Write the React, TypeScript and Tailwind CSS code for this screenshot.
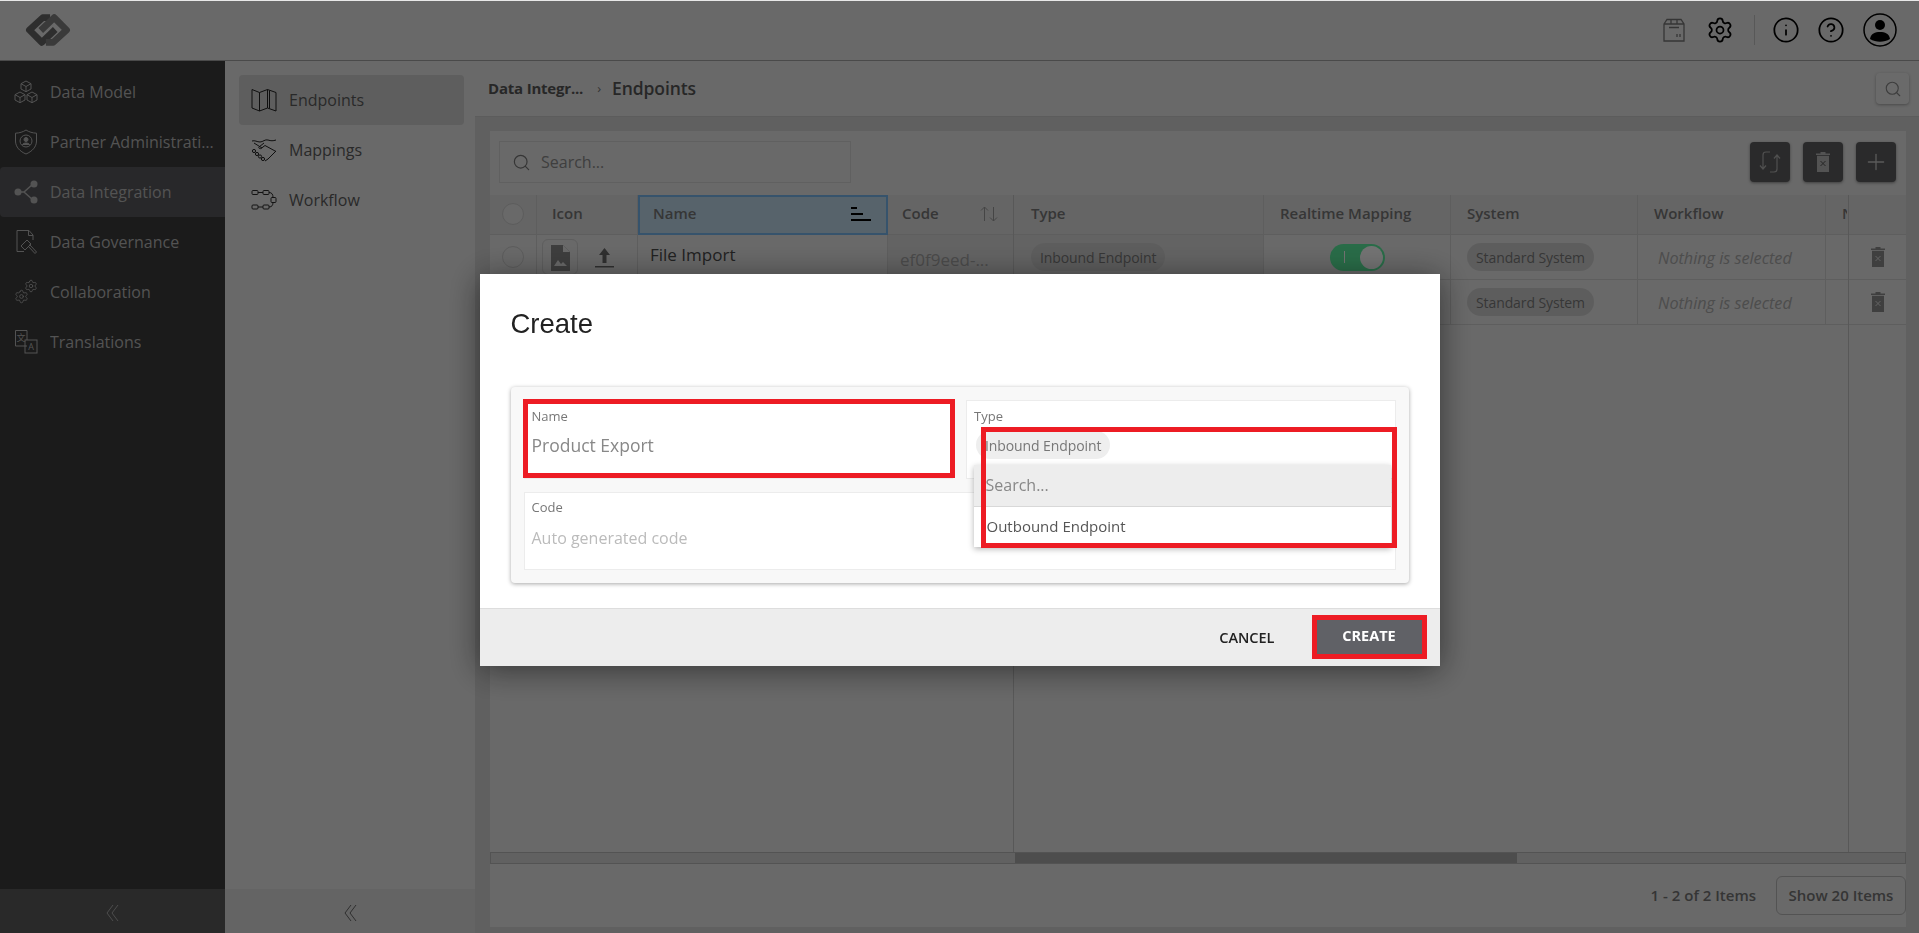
import { CircleHelp, Info, Plus, Search, Settings } from 'lucide-react';

const MAIN_NAV = ['Data Model', 'Partner Administration', 'Data Integration', 'Data Governance', 'Collaboration', 'Translations'];
const SUB_NAV = ['Endpoints', 'Mappings', 'Workflow'];

function Logo() {
  return (
    <svg width="48" height="32" viewBox="0 0 44 31" fill="none" strokeWidth="6.500" strokeLinejoin="round">
      <path d="M24 3.500H17L4 15.500 16 27.500 29 15" stroke="#666666" />
      <path d="M20 27.500H27L40 15.500 28 3.500 15 16" stroke="#808080" />
    </svg>
  );
}

function Collapse({ color }: { color: string }) {
  return (
    <svg width="13" height="18" viewBox="0 0 13 18" fill="none" stroke={color} strokeWidth="1">
      <path d="M7 1L1 9l6 8M12 1L6 9l6 8" />
    </svg>
  );
}

function MainIcon({ name }: { name: string }) {
  const common = { width: 24, height: 26, viewBox: '0 0 24 26', fill: 'none', stroke: '#b8b8b8', strokeWidth: 1 };
  if (name === 'Data Model') {
    return (
      <svg {...common}>
        <path d="M12 2l5 2.700v5.300l-5 2.700-5-2.700V4.700zM7 4.700l5 2.800 5-2.800M12 7.500v5.200" />
        <path d="M6 13l5 2.700v5.300L6 23.700 1 21v-5.300zM1 15.700l5 2.800 5-2.800M6 18.500v5.200" />
        <path d="M18 13l5 2.700v5.300l-5 2.700-5-2.700v-5.300zM13 15.700l5 2.800 5-2.800M18 18.500v5.200" />
      </svg>
    );
  }
  if (name === 'Partner Administration') {
    return (
      <svg {...common}>
        <path d="M12 1c3 2 6.500 3 10.500 3.200V12c0 6-4.500 10.500-10.500 13C6 22.500 1.500 18 1.500 12V4.200C5.500 4 9 3 12 1z" />
        <circle cx="12" cy="12" r="6" />
        <circle cx="12" cy="10.500" r="2" fill="#b8b8b8" />
        <path d="M8.500 15.500c1-2 6-2 7 0z" fill="#b8b8b8" />
      </svg>
    );
  }
  if (name === 'Data Integration') {
    return (
      <svg {...common} strokeWidth={1.5}>
        <path d="M4 13h6l9-8M10 13l9 8" />
        <circle cx="4" cy="13" r="3.500" fill="#b8b8b8" stroke="none" />
        <circle cx="20" cy="5" r="3.500" fill="#b8b8b8" stroke="none" />
        <circle cx="20" cy="21" r="3.500" fill="#b8b8b8" stroke="none" />
      </svg>
    );
  }
  if (name === 'Data Governance') {
    return (
      <svg {...common}>
        <path d="M10 22.500H3V1.500h12l4 4.500v5M14.500 1.500V6.500H19" />
        <path d="M7 17l6-6 4 4-6 6zM14 17l7 7.500 1.500-1.500L15.500 15.500" />
      </svg>
    );
  }
  if (name === 'Collaboration') {
    return (
      <svg {...common}>
        <Settings x={10} y={0} width={14} height={14} strokeWidth={1.400} color="#b8b8b8" />
        <Settings x={0} y={10} width={15} height={15} strokeWidth={1.300} color="#b8b8b8" />
      </svg>
    );
  }
  return (
    <svg {...common}>
      <path d="M13 17H1.500V1.500H13V11" />
      <rect x="11" y="11" width="12" height="13" />
      <text x="7" y="12" fontSize="9" textAnchor="middle" fill="#b8b8b8" stroke="none" fontFamily="Noto Sans CJK SC">文</text>
      <text x="17" y="21" fontSize="9" textAnchor="middle" fill="#b8b8b8" stroke="none" fontFamily="Open Sans">A</text>
    </svg>
  );
}

function SubIcon({ name }: { name: string }) {
  if (name === 'Endpoints') {
    return (
      <svg width="26" height="24" viewBox="0 0 26 24" fill="none" stroke="#222" strokeWidth="1">
        <path d="M1 1.500l7.500 3 8-3 8.500 3V23l-8.500-3-8 3L1 20zM8.500 4.500V23M16.500 1.500V20M18.500 2.500V20.500" />
      </svg>
    );
  }
  if (name === 'Mappings') {
    return (
      <svg width="26" height="24" viewBox="0 0 26 24" fill="none" stroke="#222" strokeWidth="1">
        <path d="M1 3c3-1 5 1 8 1s5-3 8-2 5 1 8 0" />
        <path d="M3 5l8 5M13 5l-5 4c-1 1 1 2 2 1.500l4-3 11 6" />
        <path d="M25 13l-8 8-3 2" />
        <circle cx="3" cy="13" r="1.600" />
        <circle cx="6" cy="16" r="1.600" />
        <circle cx="9" cy="18.500" r="1.600" />
        <circle cx="12" cy="21" r="1.600" />
      </svg>
    );
  }
  return (
    <svg width="26" height="22" viewBox="0 0 26 22" fill="none" stroke="#2c2c2c" strokeWidth="1">
      <rect x="1" y="1.500" width="6" height="4" rx="1" />
      <rect x="12" y="1.500" width="6" height="4" rx="1" />
      <rect x="1" y="16" width="6" height="4" rx="1" />
      <rect x="12" y="16" width="6" height="4" rx="1" />
      <rect x="20" y="8.500" width="5" height="5" rx="1" />
      <path d="M7 3.500h5M7 18h5M18 3.500c3 0 4 2 4 5M18 18c3 0 4-2 4-4.500" />
    </svg>
  );
}

function TrashX({ color, mark }: { color: string; mark: string }) {
  return (
    <svg width="14" height="20" viewBox="0 0 14 20">
      <path d="M4.500 0h5v1.500H14V3H0V1.500h4.500z" fill={color} />
      <path d="M1 3.800h12V20H1z" fill={color} />
      <path d="M4.500 9l5 5M9.500 9l-5 5" stroke={mark} strokeWidth="1" />
    </svg>
  );
}

function Chip({ label }: { label: string }) {
  return (
    <span className="inline-flex h-[28px] items-center rounded-full bg-[#cfcfcf] px-[9px] text-[14px] tracking-[-0.1px] text-[#7a7a7a]">{label}</span>
  );
}

function HeaderCell({ width, children, className = '' }: { width: number; children: React.ReactNode; className?: string }) {
  return (
    <div style={{ width }} className={`flex h-[40px] shrink-0 items-center border-r border-b border-[#d0d0d0] bg-[#e0e0e0] pb-[2px] text-[15px] font-semibold text-[#787878] ${className}`}>
      {children}
    </div>
  );
}

function SystemRow() {
  return (
    <div className="flex h-[45px] border-b border-[#d0d0d0]">
      <div className="w-[250px] shrink-0 border-r border-[#d0d0d0] bg-[#dcdcdc] pl-[17px] pt-[8px]">
        <Chip label="Inbound Endpoint" />
      </div>
      <div className="flex w-[187px] shrink-0 items-center justify-center border-r border-[#d0d0d0]">
        <div className="flex h-[27px] w-[55px] items-center justify-between rounded-full bg-[#5cf0a0] pl-[14px] pr-[2px]">
          <span className="h-[12px] w-px bg-white" />
          <span className="h-[23px] w-[23px] rounded-full bg-white" />
        </div>
      </div>
      <div className="flex w-[187px] shrink-0 items-center border-r border-[#d0d0d0] pl-[16px]">
        <Chip label="Standard System" />
      </div>
      <div className="flex w-[188px] shrink-0 items-center border-r border-[#d0d0d0] pl-[20px] pt-[3px] text-[16.200px] italic text-[#ababab]">
        Nothing is selected
      </div>
    </div>
  );
}

export default function App() {
  return (
    <div className="flex h-screen w-full flex-col overflow-hidden bg-white font-['Open_Sans',sans-serif]">
      <header className="flex h-[61px] shrink-0 items-center border-b border-[#a4a4a4] bg-[#e8e8e8] pl-[24px] pr-[22px]">
        <Logo />
        <div className="ml-auto flex items-center">
          <svg width="22" height="24" viewBox="0 0 22 24" fill="none" stroke="#777" strokeWidth="1.300">
            <path d="M1 6l3-4.500h14L21 6v17H1zM1 6h20M8 6V1.500M14 6V1.500M6 9.500h10M14 19v-3M17 19v-3" />
          </svg>
          <Settings size={28} strokeWidth={1.500} color="#000" className="ml-[21px]" />
          <span className="ml-[20px] mr-[17px] h-[30px] w-px bg-[#c4c4c4]" />
          <Info size={28} strokeWidth={1.500} color="#000" />
          <CircleHelp size={28} strokeWidth={1.500} color="#000" className="ml-[17px]" />
          <svg width="34" height="34" viewBox="0 0 34 34" className="ml-[18px]" fill="none">
            <circle cx="17" cy="17" r="16" stroke="#000" strokeWidth="1.500" />
            <circle cx="17" cy="12" r="5" fill="#000" />
            <path d="M7 26c1-5.500 5-7 10-7s9 1.500 10 7c-6 3.500-14 3.500-20 0z" fill="#000" />
          </svg>
        </div>
      </header>

      <div className="flex min-h-0 flex-1">
        <aside className="flex w-[225px] shrink-0 flex-col bg-[#3c3c3c]">
          <nav className="flex-1 pt-[6px]">
            {MAIN_NAV.map((item) => (
              <div key={item} className={`flex h-[50px] items-center gap-[12px] pl-[14px] pr-[8px] text-[16px] text-[#b8b8b8] ${item === 'Data Integration' ? 'rounded-l bg-[#5a5a5e]' : ''}`}>
                <span className="shrink-0"><MainIcon name={item} /></span>
                <span className="truncate">{item}</span>
              </div>
            ))}
          </nav>
          <div className="flex h-[44px] items-center justify-center bg-[#5c5c5c] pt-[4px]">
            <Collapse color="#aaa" />
          </div>
        </aside>

        <aside className="flex w-[250px] shrink-0 flex-col bg-[#e8e8e8]">
          <nav className="flex-1 pl-[14px] pr-[11px] pt-[14px]">
            {SUB_NAV.map((item) => (
              <div key={item} className={`flex h-[50px] items-center gap-[12px] rounded pl-[12px] text-[16px] text-[#5c5c5c] ${item === 'Endpoints' ? 'bg-[#d0d0d0]' : ''}`}>
                <span className="flex w-[26px] shrink-0 justify-center"><SubIcon name={item} /></span>
                {item}
              </div>
            ))}
          </nav>
          <div className="flex h-[44px] items-center justify-center bg-[#dedede] pt-[4px]">
            <Collapse color="#666" />
          </div>
        </aside>

        <main className="flex min-w-0 flex-1 flex-col bg-[#d4d4d4]">
          <div className="flex h-[56px] shrink-0 items-center border-b border-[#cccccc] bg-[#e8e8e8] pl-[13px] pr-[10px]">
            <span className="text-[15px] font-bold tracking-[-0.2px] text-[#585858]">Data Integr...</span>
            <span className="ml-[14px] mr-[11px] text-[13px] text-[#777]">›</span>
            <span className="text-[17.500px] font-semibold tracking-[-0.1px] text-[#585858]">Endpoints</span>
            <button className="ml-auto flex h-[31px] w-[33px] items-center justify-center rounded-sm bg-[#ececec] shadow-[0_1px_3px_rgba(0,0,0,0.3)]">
              <Search size={18} strokeWidth={1.500} color="#888" />
            </button>
          </div>

          <section className="ml-[15px] mr-[13px] mb-[6px] mt-[14px] flex min-h-0 flex-1 flex-col bg-[#e8e8e8]">
            <div className="flex h-[64px] shrink-0 items-center pb-[2px] pl-[9px] pr-[10px]">
              <div className="flex h-[42px] w-[352px] items-center gap-[10px] border border-[#d4d4d4] pl-[12px] text-[16px] text-[#8c8c8c]">
                <Search size={19} strokeWidth={1.500} color="#777" />
                Search...
              </div>
              <div className="ml-auto flex gap-[13px]">
                <button className="flex h-[40px] w-[40px] items-center justify-center rounded bg-[#5e5e60] shadow-[0_1px_3px_rgba(0,0,0,0.4)]">
                  <svg width="22" height="26" viewBox="0 0 22 26" fill="none" stroke="#b0b0b0" strokeWidth="1.200">
                    <path d="M11 3H7c-2 0-3 1-3 3v14M1 16.500L4 20l3-3.500M11 23h4c2 0 3-1 3-3V6M15 9.500L18 6l3 3.500" />
                  </svg>
                </button>
                <button className="flex h-[40px] w-[40px] items-center justify-center rounded bg-[#5e5e60] shadow-[0_1px_3px_rgba(0,0,0,0.4)]">
                  <TrashX color="#b8b8b8" mark="#555" />
                </button>
                <button className="flex h-[40px] w-[40px] items-center justify-center rounded bg-[#5e5e60] shadow-[0_1px_3px_rgba(0,0,0,0.4)]">
                  <Plus size={26} strokeWidth={1.200} color="#c8c8c8" />
                </button>
              </div>
            </div>

            <div className="flex min-h-0 flex-1">
              {/* frozen columns */}
              <div className="w-[524px] shrink-0 border-r border-[#c4c4c4]">
                <div className="flex">
                  <HeaderCell width={47} className="justify-center">
                    <span className="h-[22px] w-[22px] rounded-full border border-[#cccccc] bg-[#e8e8e8]" />
                  </HeaderCell>
                  <HeaderCell width={101} className="pl-[15px]">Icon</HeaderCell>
                  <div className="flex h-[40px] w-[250px] shrink-0 items-center justify-between border-2 border-[#78b8f0] bg-[#c2dcee] pb-[3px] pl-[13px] pr-[15px] text-[15px] font-semibold text-[#787878]">
                    Name
                    <svg width="20" height="14" viewBox="0 0 20 14" stroke="#000" strokeWidth="2">
                      <path d="M0 1h6M0 7h12M0 13h20" />
                    </svg>
                  </div>
                  <HeaderCell width={125} className="justify-between border-r-0 pl-[14px] pr-[15px]">
                    Code
                    <svg width="18" height="16" viewBox="0 0 18 16" fill="none" stroke="#999" strokeWidth="1">
                      <path d="M4.500 15V1M1 4.500L4.500 1 8 4.500M13.500 1v14M10 11.500l3.500 3.500 3.500-3.500" />
                    </svg>
                  </HeaderCell>
                </div>
                <div className="flex h-[45px] border-b border-[#d0d0d0]">
                  <div className="flex w-[47px] items-center justify-center border-r border-[#d0d0d0]">
                    <span className="h-[22px] w-[22px] rounded-full border border-[#cccccc]" />
                  </div>
                  <div className="flex w-[101px] border-r border-[#d0d0d0] pl-[5px] pt-[4px]">
                    <span className="flex h-[36px] w-[36px] items-start justify-center rounded-md border border-[#d0d0d0] pt-[5px]">
                      <svg width="19" height="26" viewBox="0 0 19 26">
                        <path d="M0 0h12l7 7v19H0z" fill="#8a8a8a" />
                        <path d="M12 0l7 7h-7z" fill="#e8e8e8" />
                        <path d="M3 21l4-6 3 4 2-2 4 4z" fill="#e8e8e8" />
                      </svg>
                    </span>
                    <svg width="19" height="20" viewBox="0 0 19 20" className="ml-[17px] mt-[9px]" fill="#6a6a6a">
                      <path d="M9.500 0L15 7h-3.500v8h-4V7H4z" />
                      <path d="M0 18h19v1.500H0z" />
                    </svg>
                  </div>
                  <div className="w-[250px] border-r border-[#d0d0d0] pl-[12px] pt-[7px] text-[17px] text-[#4a4a4a]">File Import</div>
                  <div className="flex-1 truncate bg-[#dcdcdc] pl-[12px] pt-[12px] text-[17px] text-[#a6a6a6]">ef0f9eed-...</div>
                </div>
                <div className="h-[45px] border-b border-[#d0d0d0]" />
              </div>

              {/* scrolling columns */}
              <div className="min-w-0 flex-1 overflow-hidden">
                <div className="flex">
                  <HeaderCell width={250} className="pl-[17px]">Type</HeaderCell>
                  <HeaderCell width={187} className="pl-[16px]">Realtime Mapping</HeaderCell>
                  <HeaderCell width={187} className="pl-[16px]">System</HeaderCell>
                  <HeaderCell width={188} className="pl-[16px]">Workflow</HeaderCell>
                  <HeaderCell width={22} className="border-r-0 pl-[16px]">
                    <span className="w-[5px] overflow-hidden">N</span>
                  </HeaderCell>
                </div>
                <SystemRow />
                <SystemRow />
              </div>

              {/* frozen action column */}
              <div className="w-[58px] shrink-0 border-l border-[#c4c4c4]">
                <div className="h-[40px] border-b border-[#d0d0d0] bg-[#e0e0e0]" />
                <div className="flex h-[45px] items-center justify-center border-b border-[#d0d0d0]">
                  <TrashX color="#8c8c8c" mark="#dddddd" />
                </div>
                <div className="flex h-[45px] items-center justify-center border-b border-[#d0d0d0]">
                  <TrashX color="#8c8c8c" mark="#dddddd" />
                </div>
              </div>
            </div>

            <div className="flex h-[12px] shrink-0 border border-[#b8b8b8] bg-[#d8d8d8]">
              <div className="ml-[524px] h-full w-[502px] bg-[#aaaaaa]" />
            </div>

            <div className="flex h-[63px] shrink-0 items-center justify-end text-[15px] font-semibold text-[#767676]">
              <span>1 - 2 of 2 Items</span>
              <button className="ml-[20px] h-[39px] w-[130px] rounded-md border border-[#b8b8b8]">Show 20 Items</button>
            </div>
          </section>
        </main>
      </div>

      {/* modal dimmer */}
      <div className="fixed inset-x-0 bottom-0 top-px flex justify-center bg-black/55 pt-[273px]">
        <div className="relative flex h-[392px] w-[960px] flex-col bg-white shadow-[0_4px_30px_rgba(0,0,0,0.5)]">
          <h2 className="h-[113px] pl-[31px] pt-[33px] font-['Liberation_Sans',sans-serif] text-[27.500px] leading-[34px] text-[#222]">Create</h2>
          <div className="ml-[31px] grid h-[196px] w-[898px] grid-cols-2 gap-[13px] rounded-sm bg-[#f8f8f8] p-[13px] shadow-[0_1px_4px_rgba(0,0,0,0.35)]">
            <div className="border border-[#ececec] bg-white pl-[7px] pt-[4px]">
              <div className="text-[13px] leading-[22px] text-[#777]">Name</div>
              <div className="mt-[6px] text-[17.500px] leading-[24px] text-[#888]">Product Export</div>
            </div>
            <div className="border border-[#ececec] bg-white pl-[7px] pt-[4px]">
              <div className="text-[13px] leading-[22px] text-[#777]">Type</div>
              <div className="ml-[2px] mt-[4px] flex">
                <span className="flex h-[28px] items-center rounded-full bg-[#eeeeee] px-[9px] text-[14px] tracking-[-0.1px] text-[#777]">Inbound Endpoint</span>
              </div>
            </div>
            <div className="col-span-2 border border-[#ececec] bg-white pl-[7px] pt-[3px]">
              <div className="text-[13px] leading-[22px] text-[#777]">Code</div>
              <div className="mt-[8px] text-[16px] leading-[24px] text-[#bbb]">Auto generated code</div>
            </div>
          </div>
          <div className="mt-auto flex h-[58px] items-center justify-end gap-[37px] border-t border-[#dddddd] bg-[#ededed] pb-[2px] pr-[13px]">
            <button className="pt-[2px] text-[14.500px] font-semibold text-[#222]">CANCEL</button>
            <button className="h-[44px] w-[115px] border-[5px] border-[#ed1c24] bg-[#606166] pb-[1px] text-[14.500px] font-bold text-white">CREATE</button>
          </div>

          {/* type dropdown */}
          <div className="absolute left-[494px] top-[191px] w-[417px] bg-white shadow-[0_2px_6px_rgba(0,0,0,0.3)]">
            <div className="flex h-[42px] items-center border-b border-[#d8d8d8] bg-[#ededed] pb-[2px] pl-[12px] text-[16px] text-[#888]">Search...</div>
            <div className="flex h-[40px] items-center pb-[2px] pl-[13px] text-[15px] text-[#555]">Outbound Endpoint</div>
          </div>

          {/* annotation frames */}
          <div className="absolute left-[43px] top-[125px] h-[79px] w-[432px] border-[5px] border-[#ed1c24]" />
          <div className="absolute left-[501px] top-[153px] h-[121px] w-[416px] border-[5px] border-[#ed1c24]" />
        </div>
      </div>
    </div>
  );
}
